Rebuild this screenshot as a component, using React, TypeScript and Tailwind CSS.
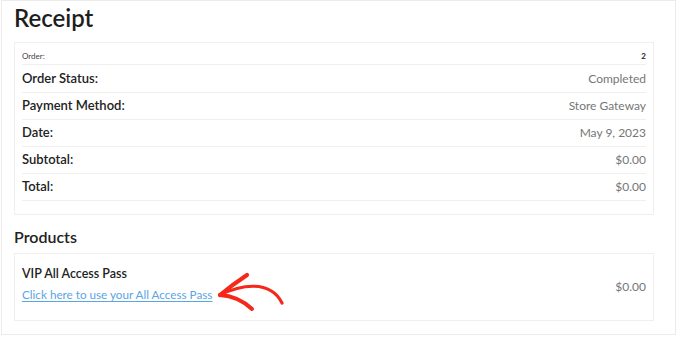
import React from "react";

const rows = [
  { label: "Order Status:", value: "Completed", h: "h-[28px]" },
  { label: "Payment Method:", value: "Store Gateway", h: "h-[27px]" },
  { label: "Date:", value: "May 9, 2023", h: "h-[27px]" },
  { label: "Subtotal:", value: "$0.00", h: "h-[27px]" },
  { label: "Total:", value: "$0.00", h: "h-[27px]" },
];

export default function App() {
  return (
    <div className="w-[680px] h-[338px] bg-white font-['Lato','Noto_Sans',sans-serif] text-[#222]">
      <div className="ml-px w-[675px] h-[335px] border border-[#ebebeb] px-[12px]">
        <h1 className="pt-px text-[24px] leading-[32px] font-semibold text-[#1e1e1e] mb-[8px]">Receipt</h1>
        <div className="w-[640px] border border-[#efefef] pb-[13px]">
          <div className="mx-[7px] h-[22px] pt-[4px] flex items-center justify-between border-b border-[#efefef] text-[8px] leading-[10px]">
            <span className="text-[#444]">Order:</span>
            <span className="font-bold text-[#222]">2</span>
          </div>
          {rows.map((r) => (
            <div
              key={r.label}
              className={`mx-[7px] ${r.h} flex items-center justify-between border-b border-[#efefef] text-[13px]`}
            >
              <span className="font-semibold text-[#222]">{r.label}</span>
              <span className="text-[12px] text-[#767676]">{r.value}</span>
            </div>
          ))}
        </div>
        <h2 className="mt-[10px] mb-[4px] text-[16px] leading-[24px] font-semibold text-[#222]">Products</h2>
        <div className="relative w-[640px] h-[68px] border border-[#efefef] px-[7px] flex items-start justify-between">
          <div className="pt-[10px] leading-[19px]">
            <div className="text-[12.5px] font-semibold text-[#222]">VIP All Access Pass</div>
            <a href="#" className="text-[11.7px] text-[#5ba4e5] underline underline-offset-[2px] decoration-[1px]">
              Click here to use your All Access Pass
            </a>
          </div>
          <div className="pt-[23px] text-[12px] leading-[19px] text-[#767676]">$0.00</div>
          <svg
            className="absolute left-[195px] top-[11px]"
            width="80"
            height="50"
            viewBox="0 0 80 50"
            fill="none"
          >
            <path d="M10 30 Q 22 20 37 10" stroke="#f4281b" strokeWidth="4.2" strokeLinecap="round" />
            <path d="M10 30 Q 28 31 42 44" stroke="#f4281b" strokeWidth="4" strokeLinecap="round" />
            <path d="M10 30 C 30 20 60 14 72 38" stroke="#f4281b" strokeWidth="3.2" strokeLinecap="round" />
          </svg>
        </div>
      </div>
    </div>
  );
}
